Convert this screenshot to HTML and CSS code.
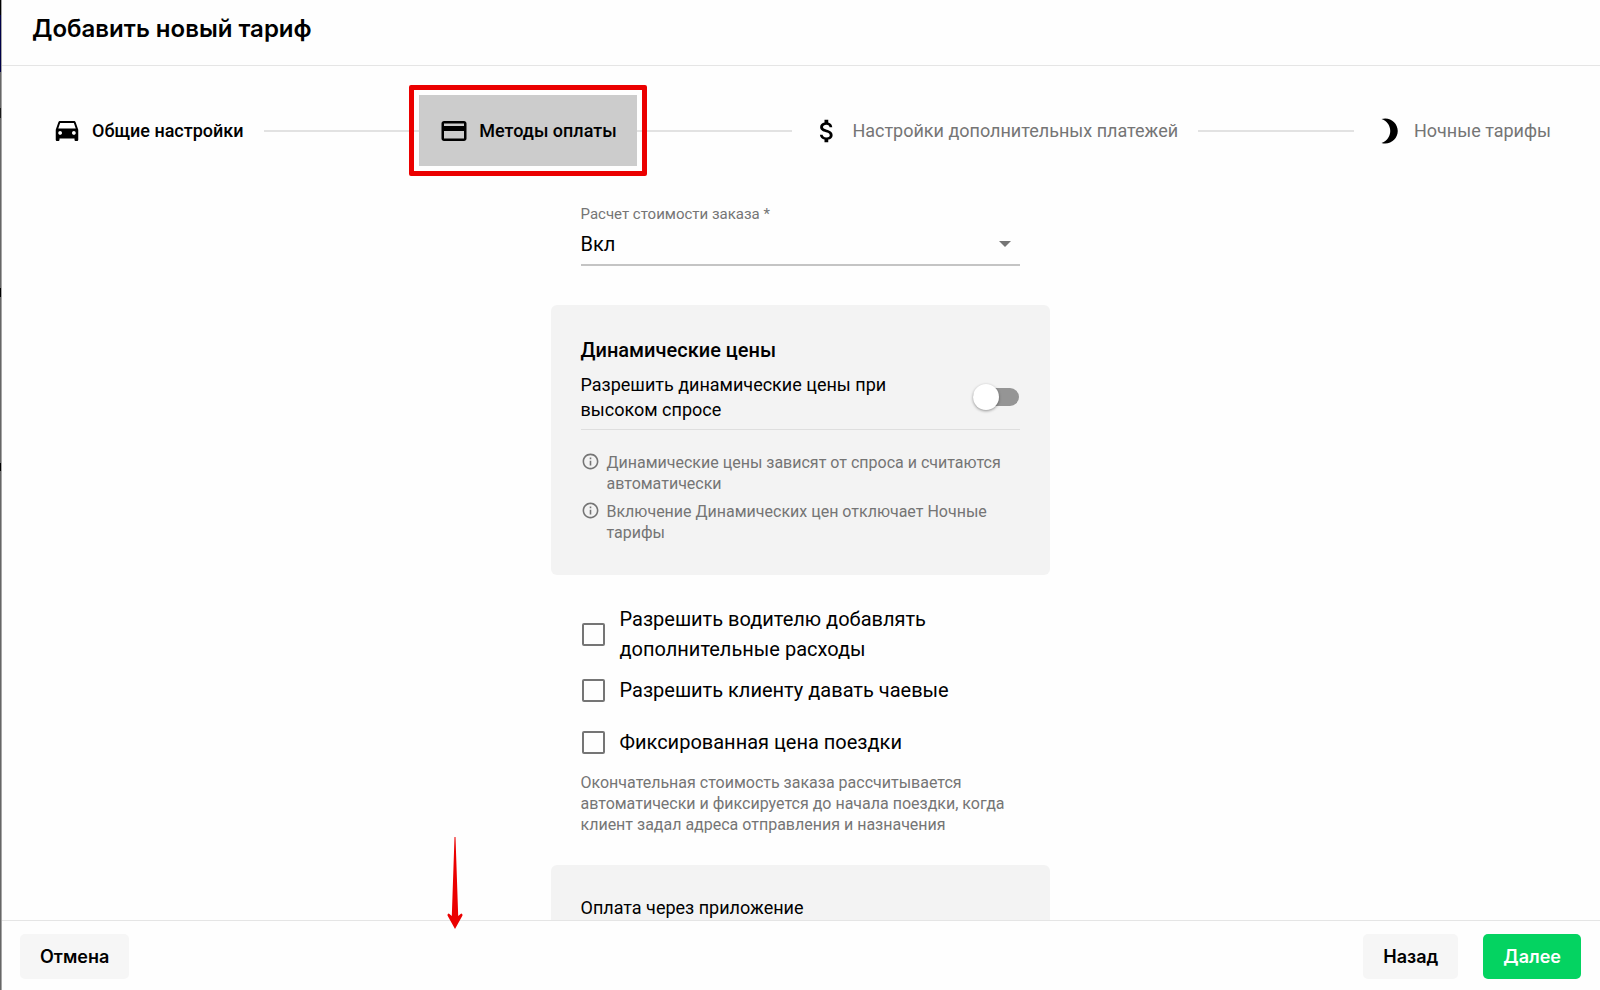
FILE: index.html
```
<!DOCTYPE html>
<html lang="ru">
<head>
    <meta charset="UTF-8">
    <title>Добавить новый тариф</title>
    <link rel="stylesheet" href="styles.css">
</head>
<body>
<form class="dialog">
    <header class="dialog-header">
        <h1>Добавить новый тариф</h1>
    </header>
    <ol class="stepper">
        <li class="step done">
            <svg viewBox="0 0 24 24"><path d="M18.92 5.01C18.72 4.42 18.16 4 17.5 4h-11c-.66 0-1.21.42-1.42 1.01L3 11v8c0 .55.45 1 1 1h1c.55 0 1-.45 1-1v-1h12v1c0 .55.45 1 1 1h1c.55 0 1-.45 1-1v-8l-2.08-5.99zM6.5 15c-.83 0-1.5-.67-1.5-1.5S5.67 12 6.5 12s1.5.67 1.5 1.5S7.33 15 6.5 15zm11 0c-.83 0-1.5-.67-1.5-1.5s.67-1.5 1.5-1.5 1.5.67 1.5 1.5-.67 1.5-1.5 1.5zM5 10l1.500-4.500h11L19 10H5z"/></svg>
            <span>Общие настройки</span>
        </li>
        <li class="line"></li>
        <li class="step current">
            <svg viewBox="0 0 24 24"><path d="M20 4H4c-1.110 0-1.990.89-1.990 2L2 18c0 1.110.89 2 2 2h16c1.110 0 2-.89 2-2V6c0-1.110-.89-2-2-2zm0 14H4v-6h16v6zm0-10H4V6h16v2z"/></svg>
            <span>Методы оплаты</span>
        </li>
        <li class="line"></li>
        <li class="step">
            <svg viewBox="0 0 24 24"><path d="M11.800 10.900c-2.270-.59-3-1.200-3-2.150 0-1.090 1.010-1.850 2.700-1.850 1.780 0 2.440.85 2.500 2.100h2.210c-.07-1.720-1.120-3.300-3.210-3.810V3h-3v2.160c-1.940.42-3.500 1.680-3.500 3.610 0 2.310 1.910 3.460 4.700 4.130 2.500.6 3 1.480 3 2.410 0 .69-.49 1.790-2.700 1.790-2.060 0-2.870-.92-2.980-2.100h-2.200c.12 2.190 1.760 3.420 3.680 3.830V21h3v-2.150c1.950-.37 3.500-1.500 3.500-3.550 0-2.840-2.430-3.810-4.700-4.400z"/></svg>
            <span>Настройки дополнительных платежей</span>
        </li>
        <li class="line"></li>
        <li class="step">
            <svg viewBox="0 0 24 24"><path d="M9 2c-1.050 0-2.050.16-3 .46 4.060 1.270 7 5.060 7 9.540s-2.940 8.270-7 9.540c.95.3 1.950.46 3 .46 5.520 0 10-4.480 10-10S14.520 2 9 2z"/></svg>
            <span>Ночные тарифы</span>
        </li>
    </ol>
    <main class="content">
        <div class="column">
            <div class="field">
                <label for="calc">Расчет стоимости заказа *</label>
                <div class="select">
                    <select id="calc">
                        <option>Вкл</option>
                        <option>Выкл</option>
                    </select>
                    <svg viewBox="0 0 12 6"><path d="M0 0h12L6 6z"/></svg>
                </div>
            </div>
            <section class="card">
                <h2>Динамические цены</h2>
                <div class="toggle-row">
                    <label for="dynamic">Разрешить динамические цены при<br>высоком спросе</label>
                    <input type="checkbox" role="switch" class="toggle" id="dynamic">
                </div>
                <ul class="notes">
                    <li>
                        <svg viewBox="0 0 24 24"><path d="M11 7h2v2h-2zm0 4h2v6h-2zm1-9C6.480 2 2 6.480 2 12s4.480 10 10 10 10-4.480 10-10S17.520 2 12 2zm0 18c-4.410 0-8-3.590-8-8s3.590-8 8-8 8 3.590 8 8-3.590 8-8 8z"/></svg>
                        <span>Динамические цены зависят от спроса и считаются<br>автоматически</span>
                    </li>
                    <li>
                        <svg viewBox="0 0 24 24"><path d="M11 7h2v2h-2zm0 4h2v6h-2zm1-9C6.480 2 2 6.480 2 12s4.480 10 10 10 10-4.480 10-10S17.520 2 12 2zm0 18c-4.410 0-8-3.590-8-8s3.590-8 8-8 8 3.590 8 8-3.590 8-8 8z"/></svg>
                        <span>Включение Динамических цен отключает Ночные<br>тарифы</span>
                    </li>
                </ul>
            </section>
            <div class="checks">
                <div class="check">
                    <input type="checkbox" id="expenses">
                    <label for="expenses">Разрешить водителю добавлять<br>дополнительные расходы</label>
                </div>
                <div class="check">
                    <input type="checkbox" id="tips">
                    <label for="tips">Разрешить клиенту давать чаевые</label>
                </div>
                <div class="check">
                    <input type="checkbox" id="fixed">
                    <label for="fixed">Фиксированная цена поездки</label>
                </div>
                <p class="hint">Окончательная стоимость заказа рассчитывается<br>автоматически и фиксируется до начала поездки, когда<br>клиент задал адреса отправления и назначения</p>
            </div>
            <section class="card">
                <p class="card-text">Оплата через приложение</p>
            </section>
        </div>
    </main>
    <footer class="dialog-footer">
        <button type="button" class="btn">Отмена</button>
        <div class="btn-group">
            <button type="button" class="btn">Назад</button>
            <button type="button" class="btn primary">Далее</button>
        </div>
    </footer>
</form>
<div class="backdrop-edge"></div>
<svg class="arrow" viewBox="0 0 16 92"><path d="M7.500 0h1l2.700 79 3-2.500q1.500 0 1.300 2L8 92 .5 78.500q-.2-2 1.300-2l3 2.500z"/></svg>
</body>
</html>
```

FILE: styles.css
```
* {
    box-sizing: border-box;
}
body {
    height: 100vh;
    margin: 0;
    overflow: hidden;
    background: #fefefe;
    color: #000;
    font-family: Roboto, "Noto Sans", sans-serif;
}
h1, h2, p, ol, ul {
    margin: 0;
    padding: 0;
}
ol, ul {
    list-style: none;
}
/* sliver of the page behind the dialog */
.backdrop-edge {
    position: fixed;
    left: 0;
    top: 0;
    bottom: 0;
    width: 2px;
    background: linear-gradient(#000 15px, #000048 15px 72px, #666 72px 108px, #1a1a1a 108px 118px, #666 118px 288px, #000 288px 297px, #666 297px 463px, #000 463px 471px, #666 471px);
    border-right: 1px solid #a5a5a5;
}
.dialog {
    display: flex;
    flex-direction: column;
    height: 100%;
}
.dialog-header {
    flex: none;
    height: 66px;
    padding: 14px 32px;
    border-bottom: 1px solid #e5e5e5;
}
.dialog-header h1 {
    font: 600 24px/30px Inter, sans-serif;
}

/* stepper */
.stepper {
    flex: none;
    display: flex;
    align-items: center;
    padding: 29px 29px 29px 32px;
}
.step {
    position: relative;
    display: flex;
    align-items: center;
    gap: 10px;
    height: 71px;
    padding: 0 20px;
    color: #757575;
    font-size: 18px;
    white-space: nowrap;
}
.step svg {
    width: 30px;
    height: 30px;
    fill: #000;
}
.step.done,
.step.current {
    color: #000;
    font-weight: 500;
}
.step.current {
    background: #ccc;
}
.step.current::after {
    content: "";
    position: absolute;
    inset: -10px;
    border: 5px solid #eb0000;
    border-radius: 2px;
}
.line {
    flex: 1;
    height: 2px;
    background: #e2e2e2;
}

.content {
    flex: 1;
    min-height: 0;
    overflow: auto;
    scrollbar-width: none;
}
.column {
    max-width: 499px;
    margin: 0 auto;
    padding-bottom: 30px;
}
.field {
    margin: 0 30px 39px;
    padding-top: 10px;
}
.field label {
    display: block;
    color: #757575;
    font-size: 15px;
    line-height: 18px;
}
.select {
    display: flex;
    align-items: center;
    height: 43px;
    padding-right: 9px;
    border-bottom: 2px solid #c4c4c4;
}
.select select {
    flex: 1;
    padding: 0;
    border: 0;
    background: none;
    appearance: none;
    color: #000;
    font: 20px/30px Roboto, sans-serif;
}
.select svg {
    width: 12px;
    height: 6px;
    fill: #757575;
}

.card {
    padding: 30px;
    border-radius: 6px;
    background: #f3f3f3;
}
.card h2 {
    font-size: 20px;
    font-weight: 500;
    line-height: 30px;
}
.toggle-row {
    display: flex;
    align-items: center;
    justify-content: space-between;
    padding: 7px 1px 7px 0;
    border-bottom: 1px solid #dedede;
    font-size: 18px;
    line-height: 25px;
}
.toggle {
    position: relative;
    width: 46px;
    height: 26px;
    margin: 0;
    appearance: none;
}
.toggle::before {
    content: "";
    position: absolute;
    inset: 4px 0;
    border-radius: 9px;
    background: #959595;
}
.toggle::after {
    content: "";
    position: absolute;
    left: 0;
    top: 0;
    width: 26px;
    height: 26px;
    border-radius: 50%;
    background: #fff;
    box-shadow: 0 1px 3px rgba(0, 0, 0, 0.4);
}
.toggle:checked::after {
    left: 20px;
}
.notes {
    display: flex;
    flex-direction: column;
    gap: 7px;
    padding: 22px 0 2px;
}
.notes li {
    display: flex;
    gap: 7px;
    color: #757575;
    font-size: 16px;
    line-height: 21px;
}
.notes svg {
    flex: none;
    width: 19px;
    height: 19px;
    fill: #757575;
}

.checks {
    display: flex;
    flex-direction: column;
    padding: 29px 30px 30px;
}
.check {
    display: flex;
    align-items: center;
    gap: 15px;
    min-height: 52px;
    font-size: 20px;
    line-height: 30px;
}
.check input {
    width: 23px;
    height: 23px;
    margin: 0 0 0 1px;
    appearance: none;
    border: 2px solid #757575;
    border-radius: 2px;
}
.check input:checked {
    background: #04d361;
}
.hint {
    padding-top: 4px;
    color: #757575;
    font-size: 16px;
    line-height: 21px;
}
.card-text {
    font-size: 18px;
    line-height: 25px;
}

.dialog-footer {
    flex: none;
    display: flex;
    justify-content: space-between;
    height: 70px;
    padding: 13px 19px 10px 20px;
    border-top: 1px solid #e5e5e5;
}
.btn-group {
    display: flex;
    gap: 25px;
}
.btn {
    height: 45px;
    padding: 0 20px;
    border: 0;
    border-radius: 5px;
    background: #f6f6f6;
    color: #000;
    font: 600 18px/25px Inter, sans-serif;
}
.btn.primary {
    background: #04d361;
    color: #fff;
}
.arrow {
    position: fixed;
    left: 447px;
    bottom: 61px;
    width: 16px;
    height: 92px;
    fill: #eb0000;
}
```
